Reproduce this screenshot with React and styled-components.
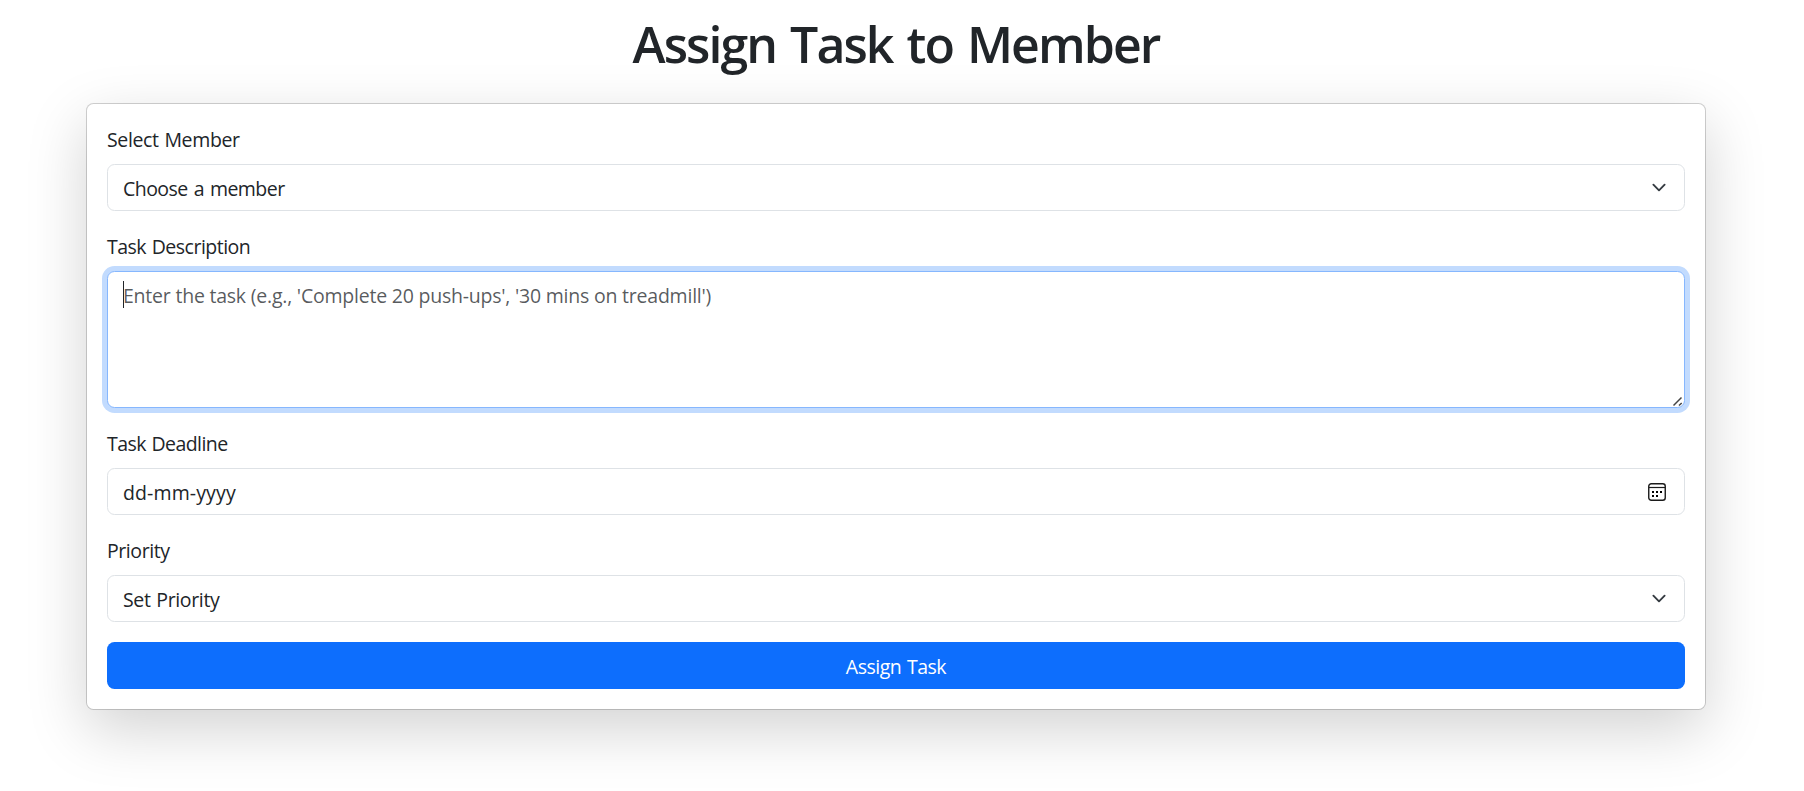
import React from 'react';
import styled, { createGlobalStyle } from 'styled-components';

const GlobalStyle = createGlobalStyle`
  *, *::before, *::after { box-sizing: border-box; }
  body {
    margin: 0;
    background: #fff;
    color: #212529;
    font-family: "Open Sans", "Noto Sans", sans-serif;
    font-size: 19.5px;
    line-height: 30px;
    overflow: hidden;
  }
`;

const Page = styled.main`
  display: flex;
  flex-direction: column;
  align-items: center;
  width: 1792px;
  min-height: 791px;
`;

const Title = styled.h1`
  margin: 14px 0 29px;
  font-size: 50px;
  font-weight: 600;
  line-height: 60px;
  letter-spacing: -1.95px;
  word-spacing: 3px;
  white-space: nowrap;
`;

const Card = styled.form`
  display: flex;
  flex-direction: column;
  gap: 20px;
  width: 1620px;
  padding: 20px;
  background: #fff;
  border: 1px solid rgba(0, 0, 0, 0.175);
  background-clip: padding-box;
  border-radius: 7.5px;
  box-shadow: 0 20px 60px rgba(0, 0, 0, 0.175);
`;

const Field = styled.div`
  display: flex;
  flex-direction: column;
  gap: 10px;
`;

const Label = styled.label`
  height: 30px;
  padding-top: 1px;
`;

const Text = styled.span`
  letter-spacing: ${(p) => p.$tracking || 0}px;
  word-spacing: ${(p) => p.$wordGap || 0}px;
  white-space: nowrap;
`;

const Control = styled.div`
  display: flex;
  align-items: center;
  justify-content: space-between;
  height: 47px;
  padding: 0 15px;
  border: 1px solid #dee2e6;
  border-radius: 7.5px;
  background: #fff;

  ${Text} {
    padding-top: 2px;
  }
`;

const TextArea = styled.div`
  position: relative;
  height: 137px;
  padding: 9px 15px;
  border: 1px solid #86b7fe;
  border-radius: 7.5px;
  background: #fff;
  color: rgba(33, 37, 41, 0.75);
  box-shadow: 0 0 0 5px rgba(13, 110, 253, 0.25);
`;

const Caret = styled.span`
  position: absolute;
  left: 15px;
  top: 9px;
  width: 1px;
  height: 27px;
  background: #212529;
`;

const Grip = styled.svg`
  position: absolute;
  right: 1px;
  bottom: 0;
`;

const CalendarIcon = styled.svg`
  margin: 1px 3px 0 0;
`;

const Submit = styled.button`
  height: 47px;
  padding: 2px 0 0;
  border: 0;
  border-radius: 7.5px;
  background: #0d6efd;
  color: #fff;
  font: inherit;
`;

const Chevron = () => (
  <svg width="20" height="15" viewBox="0 0 16 16" fill="none">
    <path d="m2 5 6 6 6-6" stroke="#343a40" strokeWidth="2" strokeLinecap="round" strokeLinejoin="round" />
  </svg>
);

const Calendar = () => (
  <CalendarIcon width="18" height="18" viewBox="0 0 18 18" fill="none">
    <rect x="0.75" y="0.75" width="16.5" height="16.5" rx="2.5" stroke="#1b1b1b" strokeWidth="1.4" />
    <path d="M1 4.5h16" stroke="#1b1b1b" strokeWidth="1.2" />
    <path d="M4 8h2v2H4zM8 8h2v2H8zM12 8h2v2h-2zM4 12h2v2H4zM8 12h2v2H8z" fill="#000" />
  </CalendarIcon>
);

export default function App() {
  return (
    <>
      <GlobalStyle />
      <Page>
        <Title>Assign Task to Member</Title>
        <Card>
          <Field>
            <Label><Text $tracking={-0.35} $wordGap={1}>Select Member</Text></Label>
            <Control><Text $tracking={-0.55} $wordGap={1.5}>Choose a member</Text><Chevron /></Control>
          </Field>
          <Field>
            <Label><Text $tracking={-0.5} $wordGap={1}>Task Description</Text></Label>
            <TextArea>
              <Caret />
              <Text $tracking={-0.22}>Enter the task (e.g., 'Complete 20 push-ups', '30 mins on treadmill')</Text>
              <Grip width="12" height="12" viewBox="0 0 12 12" stroke="#444" strokeWidth="1.5">
                <path d="M2.5 10.5 10.5 2.5M8 10.5 10.7 8" />
              </Grip>
            </TextArea>
          </Field>
          <Field>
            <Label><Text $tracking={-0.55} $wordGap={1}>Task Deadline</Text></Label>
            <Control><Text $tracking={0.12}>dd-mm-yyyy</Text><Calendar /></Control>
          </Field>
          <Field>
            <Label><Text $tracking={-0.42}>Priority</Text></Label>
            <Control><Text $tracking={-0.35} $wordGap={1}>Set Priority</Text><Chevron /></Control>
          </Field>
          <Submit type="button"><Text $tracking={-0.48} $wordGap={1}>Assign Task</Text></Submit>
        </Card>
      </Page>
    </>
  );
}
